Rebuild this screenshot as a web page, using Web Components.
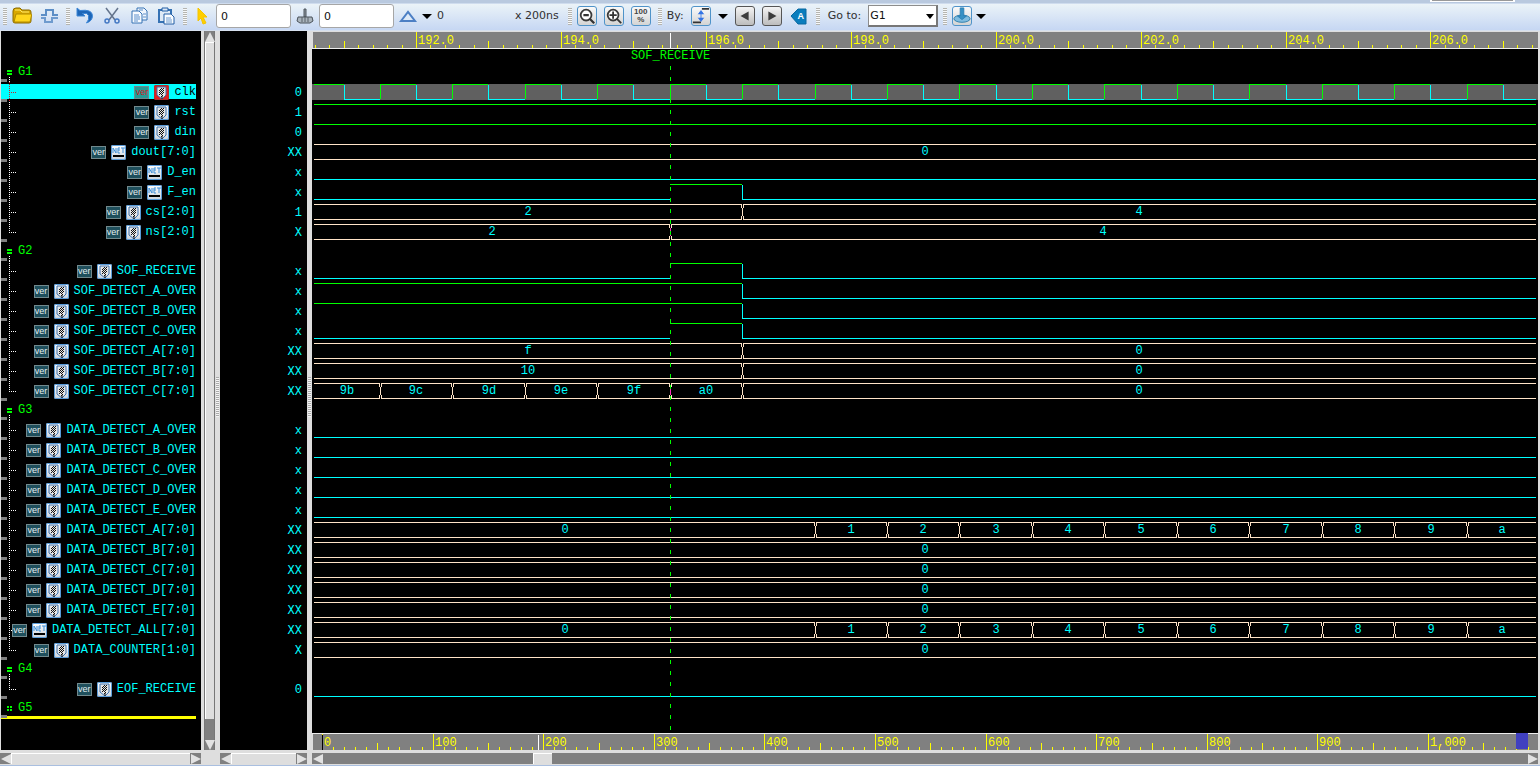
<!DOCTYPE html>
<html lang="en">
<head>
<meta charset="utf-8">
<title>Waveform viewer</title>
<style>
html, body { margin: 0; height: 100%; background: #dedede; }
</style>
</head>
<body>
<wave-app></wave-app>
<script>
const MONO = '"Liberation Mono", monospace';
const SANS = '"DejaVu Sans", sans-serif';

/* Base class: fills an open shadow root. */
class Base extends HTMLElement {
  constructor() {
    super();
    this.attachShadow({ mode: 'open' });
  }
  paint(html) { this.shadowRoot.innerHTML = html; }
}

/* ---------- signal data ---------- */
const T0 = 192, T0_X = 104, UNIT = 72.46, CURSOR = 195.5;
const timeX = t => Math.round(T0_X + (t - T0) * UNIT);
const clkEdges = [[0, 1]];
for (let t = 191; t < 240; t++) clkEdges.push([t, 0], [t + 0.5, 1]);
const count = [[0, '0']];
'1 2 3 4 5 6 7 8 9 a b c d e f'.split(' ').forEach((v, i) => count.push([197.5 + i, v]));
const bit = (...e) => ({ type: 'bit', edges: e });
const bus = (...e) => ({ type: 'bus', edges: e });
const LOW = bit([0, 0]), HIGH = bit([0, 1]), PULSE = bit([0, 0], [195.5, 1], [196.5, 0]);
const FALL = bit([0, 1], [196.5, 0]), ZERO = bus([0, '0']);

const GROUPS = [
  { name: 'G1', signals: [
    ['clk', '0', bit(...clkEdges), 'reg', true], ['rst', '1', HIGH], ['din', '0', HIGH],
    ['dout[7:0]', 'XX', ZERO, 'net'], ['D_en', 'x', LOW, 'net'], ['F_en', 'x', PULSE, 'net'],
    ['cs[2:0]', '1', bus([0, '2'], [196.5, '4'])], ['ns[2:0]', 'X', bus([0, '2'], [195.5, '4'])]] },
  { name: 'G2', signals: [
    ['SOF_RECEIVE', 'x', PULSE], ['SOF_DETECT_A_OVER', 'x', FALL], ['SOF_DETECT_B_OVER', 'x', FALL],
    ['SOF_DETECT_C_OVER', 'x', PULSE],
    ['SOF_DETECT_A[7:0]', 'XX', bus([0, 'f'], [196.5, '0'])],
    ['SOF_DETECT_B[7:0]', 'XX', bus([0, '10'], [196.5, '0'])],
    ['SOF_DETECT_C[7:0]', 'XX', bus([0, '9b'], [191.5, '9c'], [192.5, '9d'], [193.5, '9e'], [194.5, '9f'], [195.5, 'a0'], [196.5, '0'])]] },
  { name: 'G3', signals: [
    ...'ABCDE'.split('').map(c => [`DATA_DETECT_${c}_OVER`, 'x', LOW]),
    ['DATA_DETECT_A[7:0]', 'XX', bus(...count)],
    ...'BCDE'.split('').map(c => [`DATA_DETECT_${c}[7:0]`, 'XX', ZERO]),
    ['DATA_DETECT_ALL[7:0]', 'XX', bus(...count), 'net'], ['DATA_COUNTER[1:0]', 'X', ZERO]] },
  { name: 'G4', signals: [['EOF_RECEIVE', '0', LOW]] },
  { name: 'G5', signals: [] }
];

/* ---------- icons ---------- */
const ICONS = {
  folder: `<path d="M1 5q0-3 3-3h4l2 2h7q2 0 2 2v9q0 2-2 2H3q-2 0-2-2z" fill="#d9a800" stroke="#8a6a00"/><path d="M2 16L4 8h15q1 0 .7 1L18 16z" fill="#ffd61c" stroke="#b08a00"/><path d="M3 4h5l2 2h7" fill="none" stroke="#ffe96a"/>`,
  pulse: `<path d="M2 9h5V4h7v5h5" fill="none" stroke="#5c8ec6" stroke-width="2"/><path d="M2 12h4v4h7v-4h6" fill="none" stroke="#6f9bce" stroke-width="2"/>`,
  undo: `<path d="M2 2v8h8L7.500 7.500q5-1 6 2 1 4-2 7.500 6-2 6-7.500Q17 3 5 4.500z" fill="#1d66b8" stroke="#3c86d6"/>`,
  cut: `<path d="M4 2l9 12M16 2L7 14" stroke="#64748c" stroke-width="1.500"/><circle cx="5" cy="15" r="2" fill="none" stroke="#4478c4" stroke-width="1.500"/><circle cx="15" cy="15" r="2" fill="none" stroke="#4478c4" stroke-width="1.500"/>`,
  copy: `<path d="M8 2h7l3 3v9H8z" fill="#f0f6fd" stroke="#3672b4"/><path d="M3 5h7l3 3v9H3z" fill="#f6faff" stroke="#3672b4"/><path d="M5 9h5M5 11h6M5 13h6M5 15h4M10 4h4M14 8h3M14 11h3" stroke="#5d8fca"/>`,
  paste: `<path d="M3 4h12v12H3z" fill="#dfeaf6" stroke="#3672b4" stroke-width="2"/><path d="M6 2h6v3H6z" fill="#dce9f8" stroke="#235fa5"/><path d="M8 8h7l3 3v7H8z" fill="#fafcff" stroke="#235fa5"/><path d="M10 12h5M10 14h6M10 16h6" stroke="#6d9bd0"/>`,
  arrow: `<path d="M6 2l9 9h-4l3 6-3 1-2-6-3 3z" fill="#ffcf00" stroke="#f5c400"/>`,
  pin: `<path d="M9 3h2v8H9z" fill="#8b939b" stroke="#4f565e"/><path d="M3 11h14l1 4-3 2H5l-3-2z" fill="#aab4bd" stroke="#4a525a"/><path d="M7 11v5M10 11v5M13 11v5" stroke="#5a626a"/>`,
  delta: `<path d="M3 15L10 6l7 9z" fill="#dde9f7" stroke="#4c7fc4" stroke-width="2"/>`,
  zoomout: `<circle cx="9" cy="9" r="6" fill="#fff" stroke="#3a3a3a" stroke-width="2"/><path d="M6 9h6M13 13l5 5" stroke="#333" stroke-width="2.500"/>`,
  zoomin: `<circle cx="9" cy="9" r="6" fill="#fff" stroke="#3a3a3a" stroke-width="2"/><path d="M5 9h8M9 5v8M13 13l5 5" stroke="#333" stroke-width="2"/>`,
  edge: `<path d="M11 2h8M1 17h9" stroke="#333" stroke-width="2"/><path d="M10 5v10M7 8l3-4 3 4M7 12l3 4 3-4" fill="#2f6fe0" stroke="#3a78e6"/>`,
  prev: `<path d="M14 5v10L5 10z" fill="#3c3c3c"/>`,
  next: `<path d="M6 5v10l9-5z" fill="#3c3c3c"/>`,
  tag: `<path d="M2 10l7-7h8v15H9z" fill="#0a7dbd" stroke="#0969a0"/>`,
  drop: `<ellipse cx="10" cy="13" rx="9" ry="4" fill="#7fbce0" stroke="#2678a8"/><path d="M8 1h4v9h3l-5 4-5-4h3z" fill="#3590c4" stroke="#2a80b4"/>`,
  none: ''
};

class ToolButton extends Base {
  connectedCallback() {
    const n = this.getAttribute('icon');
    this.paint(`<style>
      :host { display: block; flex: none; width: 20px; height: 20px; }
      button { position: relative; display: block; box-sizing: border-box; width: 20px; height: 20px; padding: 0; border: 0; background: none; font: bold 8px/8px "Liberation Sans", sans-serif; color: #444; }
      :host([framed]) button { border: 1px solid #4f93c9; border-radius: 3px; background: linear-gradient(#fafafa, #d4d4d4); }
      :host([dark]) button { border-color: #555; background: linear-gradient(#f4f4f4, #bdbdbd); }
      svg { position: absolute; inset: 0; margin: auto; width: 20px; height: 20px; }
      :host([framed]) svg { width: 18px; height: 18px; }
      span { position: relative; display: block; }
      ::slotted(b) { color: #fff; font-size: 9px; line-height: 20px; padding-left: 4px; }
    </style><button type="button" aria-label="${this.getAttribute('label')}"><svg viewBox="0 0 20 20" aria-hidden="true">${ICONS[n]}</svg><span><slot></slot></span></button>`);
  }
}
customElements.define('tool-button', ToolButton);

class DropArrow extends Base {
  connectedCallback() {
    this.paint(`<style>
      :host { display: block; flex: none; }
      button { display: block; width: 10px; height: 12px; padding: 0; border: 0; background: none; }
      svg { display: block; }
    </style><button type="button" aria-label="More"><svg width="10" height="12"><path d="M0 4h10L5 9z" fill="#000"/></svg></button>`);
  }
}
customElements.define('drop-arrow', DropArrow);

/* A run of tools that begins with a drag grip. */
class ToolGroup extends Base {
  connectedCallback() {
    this.paint(`<style>
      :host { display: flex; align-items: center; flex: none; gap: 7px; margin-right: 7px; }
      :host([tight]) { gap: 4px; margin-right: 5px; }
      i { width: 4px; height: 17px; margin-right: -2px; background: repeating-linear-gradient(#b4b4b0 0 1px, #f6f8fa 1px 2px); }
      :host([tight]) i { margin-right: 1px; }
    </style><i></i><slot></slot>`);
  }
}
customElements.define('tool-group', ToolGroup);

class ToolBar extends Base {
  connectedCallback() {
    this.paint(`<style>
      :host { display: block; font: 11px/14px ${SANS}; color: #303030; }
      .above { display: flex; justify-content: flex-end; height: 3px; background: #b9c9df; border-bottom: 1px solid #cfdcee; }
      .above i { width: 81px; height: 1px; margin-right: 25px; background: #999; border: solid #fff; border-width: 0 2px 1px; }
      .bar { display: flex; align-items: center; box-sizing: border-box; height: 27px; padding: 0 3px 2px; background: linear-gradient(#ebf3f8, #c6d7f3); border-bottom: 1px solid #d6e0ee; overflow: hidden; }
      input { box-sizing: border-box; width: 75px; height: 24px; padding: 0 4px; border: 1px solid #a6a6a6; border-radius: 3px; background: #fff; font: 11px/14px ${SANS}; color: #111; }
      .time { width: 74px; padding-left: 1px; }
      .unit { margin-right: 4px; }
      label { padding: 0 3px; }
      .pick { display: grid; }
      select { grid-area: 1/1; width: 70px; height: 22px; padding: 0 0 0 1px; border: 1px solid #8c8c8c; border-right: 2px solid #777; border-bottom: 2px solid #777; border-radius: 0; appearance: none; background: #fff; font: 11px/14px ${SANS}; color: #111; }
      .pick svg { grid-area: 1/1; place-self: center end; margin-right: 4px; pointer-events: none; }
    </style>
    <div class="above"><i></i></div>
    <div class="bar">
      <tool-group><tool-button icon="folder" label="Open"></tool-button><tool-button icon="pulse" label="Get signals"></tool-button></tool-group>
      <tool-group><tool-button icon="undo" label="Undo"></tool-button><tool-button icon="cut" label="Cut"></tool-button><tool-button icon="copy" label="Copy"></tool-button><tool-button icon="paste" label="Paste"></tool-button></tool-group>
      <tool-group tight><tool-button icon="arrow" label="Cursor"></tool-button><input aria-label="Cursor time" value="0"><tool-button icon="pin" label="Marker"></tool-button><input aria-label="Marker time" value="0"><tool-button icon="delta" label="Delta"></tool-button><drop-arrow></drop-arrow>
        <span class="time">0</span><span class="unit">x 200ns</span></tool-group>
      <tool-group><tool-button framed icon="zoomout" label="Zoom out"></tool-button><tool-button framed icon="zoomin" label="Zoom in"></tool-button><tool-button framed icon="none" label="Zoom all">100<br>%</tool-button></tool-group>
      <tool-group><span>By:</span><tool-button framed icon="edge" label="Any change"></tool-button><drop-arrow></drop-arrow><tool-button framed dark icon="prev" label="Search backward"></tool-button><tool-button framed dark icon="next" label="Search forward"></tool-button><tool-button icon="tag" label="Annotate"><b>A</b></tool-button></tool-group>
      <tool-group tight><label for="goto">Go to:</label>
        <span class="pick"><select id="goto"><option>G1</option><option>G2</option><option>G3</option><option>G4</option><option>G5</option></select><svg width="8" height="5"><path d="M0 0h8L4 5z"/></svg></span></tool-group>
      <tool-group tight><tool-button framed icon="drop" label="Drop marker"></tool-button><drop-arrow></drop-arrow></tool-group>
    </div>`);
  }
}
customElements.define('tool-bar', ToolBar);

/* ---------- name column ---------- */
const REG = `<path d="M3 2h9v8l-4 4-5-4z" fill="#e6e6e6" stroke="#3c6fa8"/><path d="M5 6l3-3M5 8l5-5M5 10l5-5M7 10l3-3M7 12l2-2" stroke="#111"/><path d="M8 11v3" stroke="#111"/>`;
const NET = `<path d="M2 11h11" stroke="#000" stroke-width="2"/><path d="M2 8V3l3 5V3M9 3H7v5h2M7 5h2M10 3h4M12 3v5" fill="none" stroke="#3f8fd8"/>`;

class SignalName extends Base {
  connectedCallback() {
    const net = this.getAttribute('kind') === 'net';
    this.paint(`<style>
      :host { position: relative; display: flex; align-items: center; justify-content: flex-end; gap: 5px; box-sizing: border-box; height: 20px; margin-right: 5px; font: 12px/16px ${MONO}; color: #0ff; white-space: nowrap; }
      :host([selected]) { color: #000; background: linear-gradient(#0ff 0 0) 0 2px / 100% 15px no-repeat; }
      :host::before { content: ""; position: absolute; left: 0; bottom: 0; width: 6px; height: 3px; background: #808080; }
      .v { position: absolute; left: 8px; top: 0; width: 1px; height: 20px; background: repeating-linear-gradient(#fff 0 1px, transparent 1px 2px); }
      :host([last]) .v { height: 11px; }
      .h { position: absolute; left: 10px; top: 10px; width: 6px; height: 1px; background: repeating-linear-gradient(90deg, #fff 0 1px, transparent 1px 2px); }
      :host([selected]) .h { background: repeating-linear-gradient(90deg, #c22 0 1px, transparent 1px 2px); }
      :host([selected]) .v { background: repeating-linear-gradient(#c22 0 1px, transparent 1px 2px); }
      .ver { position: relative; box-sizing: border-box; width: 15px; height: 13px; border: 1px solid #71898d; background: #1f4f5c; color: #e4eef0; font: 9px/11px "Liberation Sans", sans-serif; display: flex; justify-content: center; }
      :host([selected]) .ver { background: #269a96; color: #d02020; }
      .icon { box-sizing: border-box; width: 15px; height: 15px; border-radius: 2px; background: linear-gradient(#fff, #c9d2dc); box-shadow: inset 0 0 0 1px #5a9bd8; display: block; }
      :host([selected]) .icon { background: #e02020; box-shadow: inset 0 0 0 1px #a33; }
    </style><i class="v"></i><i class="h"></i><span class="ver">ver</span>
    <svg class="icon" viewBox="0 0 15 15" aria-hidden="true">${net ? NET : REG}</svg><slot></slot>`);
  }
}
customElements.define('signal-name', SignalName);

class GroupName extends Base {
  connectedCallback() {
    this.paint(`<style>
      :host { position: relative; display: block; height: 19px; padding-left: 17px; font: 12px/19px ${MONO}; color: #0f0; }
      :host::before { content: ""; position: absolute; left: 0; bottom: 0; width: 6px; height: 3px; background: #808080; z-index: 1; }
      i { position: absolute; left: 6px; top: 7px; width: 5px; border: solid #0f0; border-width: 2px 0; height: 1px; }
      u { position: absolute; left: 8px; top: 14px; width: 1px; height: 5px; background: repeating-linear-gradient(#fff 0 1px, transparent 1px 2px); }
      :host([empty]) u { left: 8px; top: 7px; background: #000; }
      :host([empty])::after { content: ""; position: absolute; left: 0; right: 5px; bottom: -1px; height: 3px; background: #ff0; }
    </style><i></i><u></u><slot></slot>`);
  }
}
customElements.define('group-name', GroupName);

class NameList extends Base {
  connectedCallback() {
    this.paint(`<style>
      :host { display: block; box-sizing: border-box; padding-top: 32px; margin: 0 2px 0 1px; background: #000; }
    </style>` + GROUPS.map(g => `<group-name ${g.signals.length ? '' : 'empty'}>${g.name}</group-name>` +
      g.signals.map((s, i) => `<signal-name kind="${s[3] || 'reg'}" ${s[4] ? 'selected' : ''} ${i === g.signals.length - 1 ? 'last' : ''}>${s[0]}</signal-name>`).join('')).join(''));
  }
}
customElements.define('name-list', NameList);

class ValueList extends Base {
  connectedCallback() {
    this.paint(`<style>
      :host { display: block; box-sizing: border-box; padding: 33px 5px 0 0; background: #000; font: 12px/20px ${MONO}; color: #0ff; text-align: right; }
      .head { height: 19px; }
      .value { height: 20px; }
    </style>` + GROUPS.map(g => '<div class="head"></div>' + g.signals.map(s => `<div class="value">${s[1]}</div>`).join('')).join(''));
  }
}
customElements.define('value-list', ValueList);

/* ---------- drawn tracks ---------- */
class Track extends Base {
  connectedCallback() {
    this.draw();
    this.watch = new ResizeObserver(() => this.draw());
    this.watch.observe(this);
  }
  disconnectedCallback() { this.watch.disconnect(); }
}
const box = (x, y, w, h, c) => w > 0 ? `<rect x="${x}" y="${y}" width="${w}" height="${h}" fill="${c}"/>` : '';

class SignalWave extends Track {
  draw() {
    const { type, edges } = this.wave, W = this.clientWidth, end = W - 2;
    let out = this.selected ? box(0, 2, W, 16, '#606060') : '';
    const spans = edges.map((e, i) => [Math.max(2, timeX(e[0])), i + 1 < edges.length ? Math.min(end, timeX(edges[i + 1][0])) : end, e[1], e[0]]).filter(s => s[1] > s[0]);
    spans.forEach(([a, b, v, t], i) => {
      if (type === 'bit') {
        out += box(a, v ? 2 : 17, b - a, 1, v ? '#0f0' : '#0ff');
        if (i && !(v && t === CURSOR && !this.selected)) out += box(a, v ? 2 : 3, 1, 15, v ? '#0f0' : '#0ff');
      } else {
        const l = i ? a + 1 : a;
        out += box(l, 2, b - l, 1, '#ffe4c8') + box(l, 17, b - l, 1, '#ffe4c8');
        if (i) out += box(a + 1, 2, 1, 4, '#ffe4c8') + box(a + 1, 14, 1, 4, '#ffe4c8') + box(a - 1, 2, 1, 4, '#ffe4c8') + box(a - 1, 14, 1, 4, '#ffe4c8') + box(a, 6, 1, 8, t === CURSOR ? '#ff30c0' : '#ffe4c8');
        if (b - a > 20) out += `<text x="${Math.round((a + b) / 2)}" y="13">${v}</text>`;
      }
    });
    this.paint(`<style>
      :host { display: block; height: 20px; overflow: hidden; }
      svg { display: block; width: 100%; height: 20px; }
      text { font: 12px ${MONO}; fill: #0ff; text-anchor: middle; }
    </style><svg>${out}</svg>`);
  }
}
customElements.define('signal-wave', SignalWave);

class TimeRuler extends Track {
  draw() {
    const n = k => +this.getAttribute(k), W = this.clientWidth;
    const origin = n('origin'), step = n('step'), px = n('px'), first = n('first');
    const digits = this.hasAttribute('decimal') ? 1 : 0;
    let out = '';
    for (let i = first; origin + i * px / 10 < W - 1; i++) {
      const x = Math.round(origin + i * px / 10), major = i % 10 === 0, mid = i % 5 === 0;
      out += major ? box(x, 0, 1, 16, '#ff0') : mid ? box(x, 9, 1, 7, '#ff0') : box(x, 13, 1, 3, '#ff0');
      if (major) out += `<text x="${x + 2}" y="12">${(n('start') + i / 10 * step).toLocaleString('en-US', { minimumFractionDigits: digits })}</text>`;
    }
    if (this.hasAttribute('zero')) out += box(origin, 1, 1, 15, '#000');
    out += box(n('cursor'), 1, 1, 15, '#fff');
    this.paint(`<style>
      :host { display: block; height: 16px; margin-left: 1px; background: #808080; overflow: hidden; }
      svg { display: block; width: 100%; height: 16px; }
      text { font: 12px ${MONO}; fill: #ff0; }
    </style><svg>${out}</svg>`);
  }
}
customElements.define('time-ruler', TimeRuler);

class WavePane extends Base {
  connectedCallback() {
    this.paint(`<style>
      :host { display: flex; flex-direction: column; padding-top: 1px; min-width: 0; }
      .plot { position: relative; flex: 1; margin-top: 1px; background: #000; box-shadow: 0 -1px #eee, 0 1px #eee; overflow: hidden; }
      .mark { position: absolute; left: 358px; top: 0; bottom: 3px; width: 1px; }
      .mark span { position: absolute; left: 50%; top: 0; transform: translateX(-50%); font: 12px/14px ${MONO}; color: #0f0; }
      .mark i { position: absolute; left: 0; top: 17px; bottom: 0; width: 1px; background: repeating-linear-gradient(#0f0 0 4px, transparent 4px 11px); }
      .strip { height: 14px; }
      .head { height: 19px; }
      .overview { position: relative; margin-top: 1px; }
      .range { position: absolute; right: 10px; top: -1px; width: 12px; height: 16px; background: #4040c0; }
    </style>
    <time-ruler decimal start="192" step="2" origin="103" px="144.92" first="-7" cursor="357"></time-ruler>
    <div class="plot"><div class="strip"></div><div class="rows"></div><div class="mark"><i></i><span>SOF_RECEIVE</span></div></div>
    <div class="overview"><time-ruler zero start="0" step="100" origin="9" px="110.6" first="0" cursor="225"></time-ruler><div class="range"></div></div>`);
    const rows = this.shadowRoot.querySelector('.rows');
    for (const g of GROUPS) {
      const head = document.createElement('div');
      head.className = 'head';
      rows.append(head);
      for (const s of g.signals) {
        const w = document.createElement('signal-wave');
        w.wave = s[2];
        w.selected = !!s[4];
        rows.append(w);
      }
    }
  }
}
customElements.define('wave-pane', WavePane);

/* ---------- scroll bars and splitters ---------- */
class ScrollBar extends Base {
  connectedCallback() {
    const v = this.hasAttribute('vertical');
    const a = v ? ['M5 0l5 10H0z', 'M0 0h10L5 10z'] : ['M0 5l10-5v10z', 'M0 0v10l10-5z'];
    this.paint(`<style>
      :host { display: flex; flex-direction: ${v ? 'column' : 'row'}; box-sizing: border-box; background: #808080; min-width: 0; }
      :host([vertical]) { margin: 0 0 0 1px; border-right: 1px solid #777; border-left: 1px solid #777; }
      button { flex: none; width: ${v ? '100%' : '11px'}; height: 11px; padding: 0; border: 0; background: none; display: grid; place-items: center; }
      svg { display: block; }
      .lead { flex: ${this.getAttribute('lead') || 0} 1 0; }
      .thumb { flex: ${this.getAttribute('size')} 1 0; box-sizing: border-box; background: #dedede; border: solid #fff; border-width: 1px 0 0 1px; }
      .rest { flex: ${this.getAttribute('rest') || 0} 1 0; }
    </style><button type="button" aria-label="Scroll back"><svg width="10" height="10"><path d="${a[0]}" fill="#e2e2e2"/></svg></button>
    <div class="lead"></div><div class="thumb"></div><div class="rest"></div>
    <button type="button" aria-label="Scroll forward"><svg width="10" height="10"><path d="${a[1]}" fill="#e2e2e2"/></svg></button>`);
  }
}
customElements.define('scroll-bar', ScrollBar);

class PaneSplitter extends Base {
  connectedCallback() {
    this.paint(`<style>
      :host { display: flex; align-items: center; justify-content: center; background: #dedede; padding-top: 12px; }
      i { width: 3px; height: 40px; background: repeating-linear-gradient(#aaa 0 1px, #f4f4f4 1px 2px); }
    </style><i></i>`);
  }
}
customElements.define('pane-splitter', PaneSplitter);

class WaveApp extends Base {
  connectedCallback() {
    this.paint(`<style>
      :host { display: flex; flex-direction: column; box-sizing: border-box; min-height: 100vh; background: #dedede; border-bottom: 1px solid #a9bfe0; }
      .main { flex: 1; display: grid; grid-template-columns: 203px 12px 5px 87px 5px minmax(0, 1fr); grid-template-rows: 1fr 11px; row-gap: 3px; padding: 0 2px 1px 0; }
      .names { margin-right: 2px; }
      .values { grid-column: 4; }
      .waves { grid-column: 6; }
    </style>
    <tool-bar></tool-bar>
    <div class="main">
      <name-list></name-list><scroll-bar vertical size="677" rest="20"></scroll-bar><pane-splitter></pane-splitter>
      <value-list></value-list><pane-splitter></pane-splitter><wave-pane></wave-pane>
      <scroll-bar class="names" size="1"></scroll-bar><scroll-bar class="values" size="1"></scroll-bar>
      <scroll-bar class="waves" lead="210" size="18" rest="976"></scroll-bar>
    </div>`);
  }
}
customElements.define('wave-app', WaveApp);
</script>
</body>
</html>
